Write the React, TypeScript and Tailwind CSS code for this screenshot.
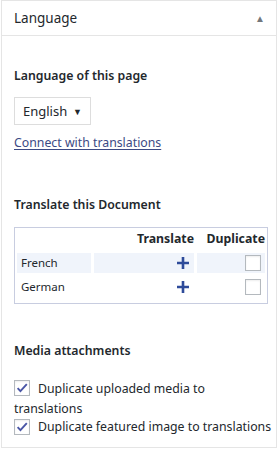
import { useState } from "react";

const font = { fontFamily: '"Noto Sans", "Open Sans", sans-serif' };

function Check({ checked }: { checked: boolean }) {
  return (
    <span className="flex h-4 w-4 shrink-0 items-center justify-center border border-[#b4b9be] bg-white shadow-[inset_0_1px_2px_rgba(0,0,0,0.07)]">
      {checked && (
        <svg viewBox="0 0 16 16" className="h-4 w-4">
          <path d="M3 8.2l3.2 3.3L13.5 3.5" fill="none" stroke="#4a56a6" strokeWidth="2.2" />
        </svg>
      )}
    </span>
  );
}

function Plus() {
  return (
    <svg viewBox="0 0 12 12" className="h-3 w-3">
      <path d="M6 0v12M0 6h12" stroke="#2e4b9a" strokeWidth="2.6" />
    </svg>
  );
}

export default function App() {
  const [media, setMedia] = useState(true);
  const [featured, setFeatured] = useState(true);

  const langs = ["French", "German"];

  return (
    <div className="h-[450px] w-[280px] bg-white pl-px pr-[3px] pb-[2px] text-[#23282d]" style={font}>
      <div className="flex h-full flex-col border border-[#e5e5e5] bg-white">
        <div className="flex h-[35px] shrink-0 items-center justify-between border-b border-[#e5e5e5] pl-3 pr-[11px]">
          <span className="text-[13.5px]">Language</span>
          <span className="text-[10px] text-[#72777c]">▲</span>
        </div>

        <div className="px-3 pt-[31px] text-[12.3px]">
          <p className="font-semibold">Language of this page</p>

          <div className="mt-[12px] flex h-[28px] w-[77px] items-center justify-between border border-[#dddddd] bg-white pl-[8px] pr-[8px] text-[13px]">
            <span>English</span>
            <span className="text-[9px]">▼</span>
          </div>

          <a href="#" className="mt-[9px] inline-block text-[12.3px] text-[#3c4a84] underline underline-offset-2">
            Connect with translations
          </a>

          <p className="mt-[43px] font-semibold">Translate this Document</p>

          <div className="mt-[13px] w-[254px] border border-[#c8cde0] px-[2px] pb-[6px] pt-[2px]">
            <div className="grid grid-cols-[74px_100px_1fr] gap-x-[3px] gap-y-[4px] text-[11.5px]">
              <div />
              <div className="text-right text-[12.3px] font-bold">Translate</div>
              <div className="text-right text-[12.3px] font-bold">Duplicate</div>
              {langs.map((l, i) => (
                <>
                  <div key={l + "a"} className={`flex h-[20px] items-center pl-[4px] ${i === 0 ? "bg-[#f0f4fb]" : ""}`}>
                    {l}
                  </div>
                  <div key={l + "b"} className={`flex h-[20px] items-center justify-end pr-[5px] ${i === 0 ? "bg-[#f0f4fb]" : ""}`}>
                    <Plus />
                  </div>
                  <div key={l + "c"} className={`flex h-[20px] items-center justify-end pr-[4px] ${i === 0 ? "bg-[#f0f4fb]" : ""}`}>
                    <Check checked={false} />
                  </div>
                </>
              ))}
            </div>
          </div>

          <p className="mt-[38px] font-semibold">Media attachments</p>

          <label className="mt-[17px] block leading-[20px]" onClick={() => setMedia(!media)}>
            <span className="mr-[8px] inline-flex translate-y-[3px]">
              <Check checked={media} />
            </span>
            Duplicate uploaded media to translations
          </label>
          <label className="-mt-[2px] flex items-center gap-[8px] leading-[19px]" onClick={() => setFeatured(!featured)}>
            <Check checked={featured} />
            <span className="whitespace-nowrap">Duplicate featured image to translations</span>
          </label>
        </div>
      </div>
    </div>
  );
}
